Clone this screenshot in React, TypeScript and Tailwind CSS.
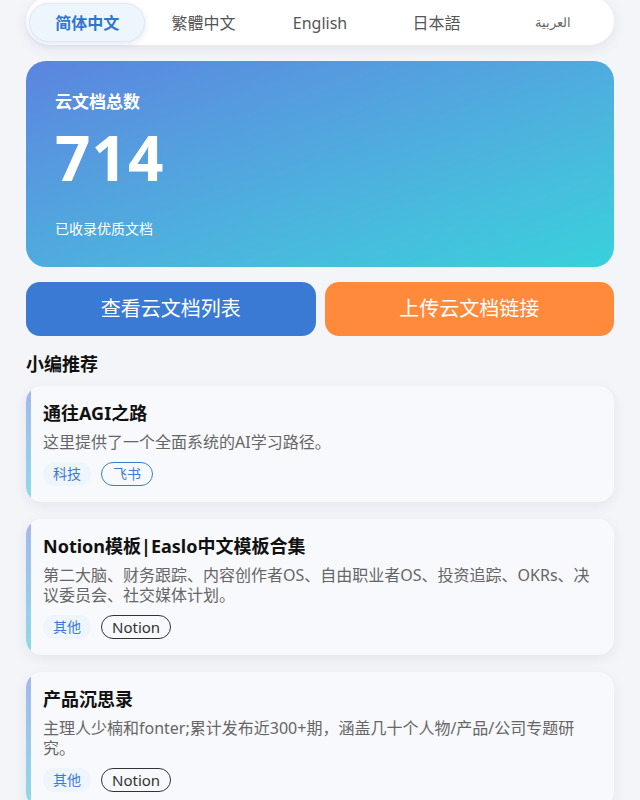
import React from "react";

const langs = ["简体中文", "繁體中文", "English", "日本語", "العربية"];

type Rec = {
  title: string;
  desc: string;
  cat: string;
  platform: string;
  outline: "blue" | "dark";
};

const recs: Rec[] = [
  {
    title: "通往AGI之路",
    desc: "这里提供了一个全面系统的AI学习路径。",
    cat: "科技",
    platform: "飞书",
    outline: "blue",
  },
  {
    title: "Notion模板|Easlo中文模板合集",
    desc: "第二大脑、财务跟踪、内容创作者OS、自由职业者OS、投资追踪、OKRs、决议委员会、社交媒体计划。",
    cat: "其他",
    platform: "Notion",
    outline: "dark",
  },
  {
    title: "产品沉思录",
    desc: "主理人少楠和fonter;累计发布近300+期，涵盖几十个人物/产品/公司专题研究。",
    cat: "其他",
    platform: "Notion",
    outline: "dark",
  },
];

const RecCard = ({ item }: { item: Rec }) => (
  <div className="flex overflow-hidden rounded-[16px] bg-[#f8f9fd] shadow-[0_4px_14px_rgba(30,40,80,0.07)]">
    <div className="w-[5px] shrink-0 bg-linear-to-b from-[#a3b6ef] to-[#8edbe6]" />
    <div className="flex-1 pl-[12px] pr-[18px] pt-[14px] pb-[16px]">
      <div className="text-[18px] leading-[26px] font-bold text-[#111]">{item.title}</div>
      <div className="mt-[6px] text-[16px] leading-[20px] text-[#666]">{item.desc}</div>
      <div className="mt-[10px] flex gap-[10px]">
        <span className="rounded-full bg-[#eef5fd] px-[10px] text-[14px] leading-[24px] text-[#3a7bd5]">
          {item.cat}
        </span>
        <span
          className={
            item.outline === "blue"
              ? "rounded-full border border-[#3a7bd5] px-[11px] text-[14px] leading-[22px] text-[#3a7bd5]"
              : "rounded-full border border-[#333] px-[10px] text-[15px] leading-[22px] text-[#333]"
          }
        >
          {item.platform}
        </span>
      </div>
    </div>
  </div>
);

export default function App() {
  return (
    <div
      className="min-h-[800px] bg-[#f4f5f9] px-[26px] pb-10"
      style={{ fontFamily: '"Noto Sans", "Noto Sans CJK SC", sans-serif' }}
    >
      {/* language switch */}
      <div className="-mt-[3px] grid h-[48px] grid-cols-5 rounded-full bg-white p-[3px] pt-[6px] shadow-[0_4px_14px_rgba(30,40,80,0.08)]">
        {langs.map((l, i) => (
          <div
            key={l}
            className={
              i === 0
                ? "flex items-center justify-center rounded-full border border-[#dfe8f3] bg-[#eef6fd] text-[16px] font-bold text-[#2f76cf] shadow-[0_2px_6px_rgba(30,60,120,0.12)]"
                : i === 4
                ? "flex items-center justify-center text-[13px] text-[#666]"
                : "flex items-center justify-center text-[16px] text-[#555]"
            }
          >
            {l}
          </div>
        ))}
      </div>

      {/* stats card */}
      <div className="mt-[16px] h-[206px] rounded-[20px] bg-linear-to-br from-[#5b84df] to-[#37d1db] px-[29px] pt-[29px] text-white">
        <div className="text-[17px] leading-[24px] font-bold">云文档总数</div>
        <div className="mt-[11px] text-[62px] leading-[64px] font-bold tracking-[1px]">714</div>
        <div className="mt-[30px] text-[14px] leading-[20px]">已收录优质文档</div>
      </div>

      {/* buttons */}
      <div className="mt-[15px] flex gap-[9px]">
        <button className="h-[54px] flex-1 rounded-[14px] bg-[#3b7ad4] text-[20px] text-white">
          查看云文档列表
        </button>
        <button className="h-[54px] flex-1 rounded-[14px] bg-[#ff8a3c] text-[20px] text-white">
          上传云文档链接
        </button>
      </div>

      <div className="mt-[14px] text-[18px] leading-[28px] font-bold text-[#111]">小编推荐</div>

      <div className="mt-[8px] flex flex-col gap-[17px]">
        {recs.map((r) => (
          <RecCard key={r.title} item={r} />
        ))}
      </div>
    </div>
  );
}
